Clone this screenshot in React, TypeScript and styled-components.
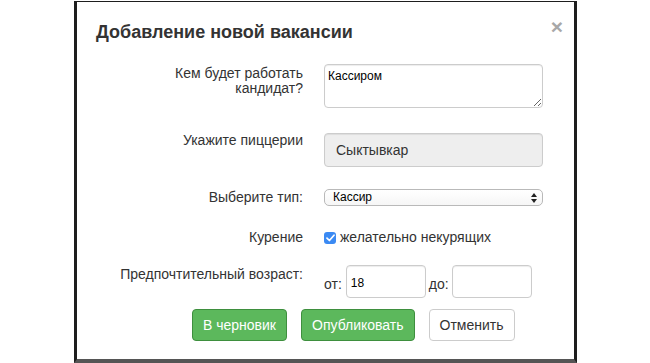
import React from "react";
import styled, { createGlobalStyle } from "styled-components";

const Global = createGlobalStyle`
  html, body { margin: 0; padding: 0; background: #fff; overflow: hidden; }
  body { font-family: "Liberation Sans", Arial, sans-serif; color: #333; }
  * { box-sizing: border-box; }
`;

const Page = styled.div`
  padding-top: 1px;
`;

const Frame = styled.div`
  margin-left: 74px;
  width: 503px;
  height: 362px;
  border-style: solid;
  border-color: #1e1e1e;
  border-bottom-color: #555;
  border-width: 1px 3px 4px 3px;
  background: #fff;
  overflow: hidden;
`;

const Header = styled.div`
  display: flex;
  justify-content: space-between;
  align-items: flex-start;
  padding: 20px 11px 0 19px;
`;

const Title = styled.h4`
  margin: 0;
  font-size: 18px;
  line-height: 20px;
  font-weight: bold;
  color: #333;
`;

const Close = styled.button`
  border: 0;
  background: none;
  padding: 0;
  margin-top: -6px;
  font-family: "Liberation Sans", Arial, sans-serif;
  font-size: 21px;
  font-weight: bold;
  line-height: 21px;
  color: #a8a8a8;
  cursor: pointer;
`;

const Form = styled.div`
  display: flex;
  flex-direction: column;
  padding-top: 22px;
`;

const Row = styled.div<{ $mt?: number }>`
  display: flex;
  align-items: flex-start;
  gap: 21px;
  margin-top: ${(p) => p.$mt ?? 0}px;
`;

const Label = styled.label<{ $pt?: number }>`
  width: 226px;
  flex: none;
  text-align: right;
  font-size: 14px;
  line-height: 15px;
  color: #333;
  padding-top: ${(p) => p.$pt ?? 0}px;
`;

const Field = styled.div`
  width: 219px;
  flex: none;
`;

const TextArea = styled.textarea`
  display: block;
  width: 219px;
  height: 44px;
  border: 1px solid #ccc;
  border-radius: 4px;
  padding: 4px 3px;
  font-family: "Liberation Sans", Arial, sans-serif;
  font-size: 12px;
  line-height: 14px;
  color: #000;
  box-shadow: inset 0 1px 1px rgba(0, 0, 0, 0.075);
  resize: both;
  outline: none;
`;

const ReadOnlyInput = styled.input`
  display: block;
  width: 219px;
  height: 34px;
  border: 1px solid #ccc;
  border-radius: 4px;
  background: #eee;
  padding: 0 11px;
  font-family: "Liberation Sans", Arial, sans-serif;
  font-size: 14px;
  color: #333;
  box-shadow: inset 0 1px 1px rgba(0, 0, 0, 0.075);
  outline: none;
`;

const SelectWrap = styled.div`
  position: relative;
  width: 219px;
  height: 17px;
`;

const Select = styled.select`
  appearance: none;
  -webkit-appearance: none;
  display: block;
  width: 100%;
  height: 17px;
  border: 1px solid #b9b9b9;
  border-radius: 5px;
  background: linear-gradient(#ffffff, #f6f6f6);
  padding: 0 0 0 8px;
  font-family: "Liberation Sans", Arial, sans-serif;
  font-size: 12px;
  line-height: 15px;
  color: #000;
  outline: none;
`;

const SelectArrows = styled.svg`
  position: absolute;
  right: 6px;
  top: 4px;
  pointer-events: none;
`;

const CheckLine = styled.label`
  display: flex;
  align-items: center;
  gap: 4px;
  font-size: 14px;
  line-height: 15px;
  color: #333;
`;

const CheckBox = styled.span`
  display: inline-flex;
  align-items: center;
  justify-content: center;
  width: 12px;
  height: 12px;
  border-radius: 3px;
  background: #3b8af3;
  margin-top: 1px;
`;

const AgeLine = styled.div`
  display: flex;
  align-items: center;
  font-size: 14px;
  color: #333;
`;

const AgeText = styled.span<{ $ml: number; $mr: number }>`
  margin-left: ${(p) => p.$ml}px;
  margin-right: ${(p) => p.$mr}px;
  padding-top: 5px;
`;

const AgeInput = styled.input`
  width: 80px;
  height: 33px;
  border: 1px solid #ccc;
  border-radius: 4px;
  padding: 0 4px;
  font-family: "Liberation Sans", Arial, sans-serif;
  font-size: 12px;
  color: #000;
  padding-top: 3px;
  box-shadow: inset 0 1px 1px rgba(0, 0, 0, 0.075);
  outline: none;
`;

const Buttons = styled.div`
  display: flex;
  gap: 14px;
  margin-top: 11px;
  padding-left: 115px;
`;

const Button = styled.button<{ $variant: "success" | "default" }>`
  height: 32px;
  padding: 0 10px;
  border-radius: 4px;
  font-family: "Liberation Sans", Arial, sans-serif;
  font-size: 14px;
  cursor: pointer;
  border: 1px solid ${(p) => (p.$variant === "success" ? "#3e8f3e" : "#ccc")};
  background: ${(p) => (p.$variant === "success" ? "#5cb85c" : "#fff")};
  color: ${(p) => (p.$variant === "success" ? "#fff" : "#333")};
`;

export default function App() {
  return (
    <>
      <Global />
      <Page>
        <Frame>
          <Header>
            <Title>Добавление новой вакансии</Title>
            <Close aria-label="Закрыть">×</Close>
          </Header>
          <Form>
            <Row>
              <Label $pt={2}>
                Кем будет работать
                <br />
                кандидат?
              </Label>
              <Field>
                <TextArea defaultValue="Кассиром" />
              </Field>
            </Row>
            <Row $mt={25}>
              <Label $pt={0}>Укажите пиццерии</Label>
              <Field>
                <ReadOnlyInput readOnly value="Сыктывкар" />
              </Field>
            </Row>
            <Row $mt={22}>
              <Label $pt={1}>Выберите тип:</Label>
              <Field>
                <SelectWrap>
                  <Select defaultValue="Кассир">
                    <option>Кассир</option>
                  </Select>
                  <SelectArrows width="6" height="10" viewBox="0 0 6 10">
                    <path d="M3 0 L6 4 L0 4 Z" fill="#222" />
                    <path d="M0 6 L6 6 L3 10 Z" fill="#222" />
                  </SelectArrows>
                </SelectWrap>
              </Field>
            </Row>
            <Row $mt={24}>
              <Label $pt={0}>Курение</Label>
              <Field>
                <CheckLine>
                  <CheckBox>
                    <svg width="9" height="8" viewBox="0 0 9 8">
                      <path
                        d="M1 4.2 L3.4 6.5 L8 1.2"
                        fill="none"
                        stroke="#fff"
                        strokeWidth="1.7"
                        strokeLinecap="round"
                        strokeLinejoin="round"
                      />
                    </svg>
                  </CheckBox>
                  желательно некурящих
                </CheckLine>
              </Field>
            </Row>
            <Row $mt={20}>
              <Label $pt={2}>Предпочтительный возраст:</Label>
              <AgeLine>
                <AgeText $ml={0} $mr={4}>от:</AgeText>
                <AgeInput defaultValue="18" />
                <AgeText $ml={3} $mr={3}>до:</AgeText>
                <AgeInput defaultValue="" />
              </AgeLine>
            </Row>
            <Buttons>
              <Button $variant="success">В черновик</Button>
              <Button $variant="success">Опубликовать</Button>
              <Button $variant="default">Отменить</Button>
            </Buttons>
          </Form>
        </Frame>
      </Page>
    </>
  );
}
